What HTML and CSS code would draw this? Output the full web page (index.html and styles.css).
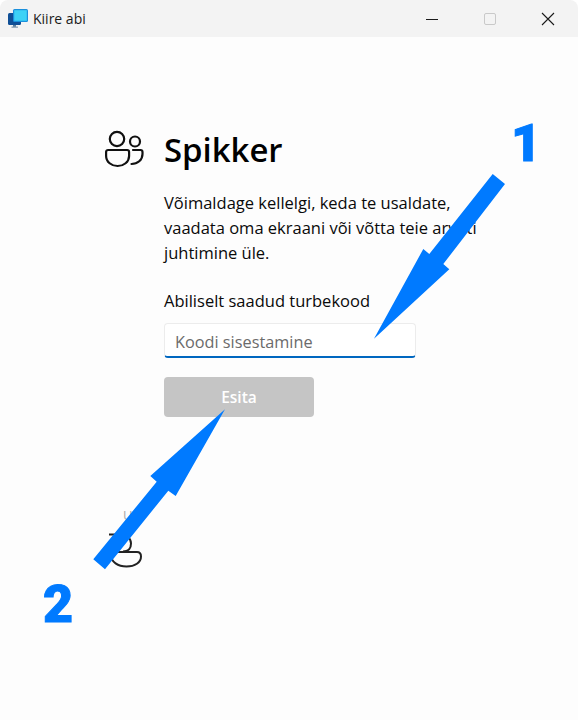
FILE: index.html
```html
<!DOCTYPE html>
<html lang="et">
<head>
    <meta charset="UTF-8">
    <meta name="viewport" content="width=device-width, initial-scale=1.0">
    <title>Kiire abi</title>
    <link rel="stylesheet" href="styles.css">
</head>
<body>
    <div class="window">
        <div class="titlebar">
            <svg class="app-icon" width="20" height="19" viewBox="0 0 20 19">
                <rect x="0" y="4" width="13" height="12" rx="1.5" fill="#0f4f96"/>
                <rect x="5" y="16" width="3" height="2" fill="#5b7f9e"/>
                <rect x="3.5" y="17.5" width="6.5" height="1.3" fill="#8aa0b3"/>
                <rect x="5" y="0" width="15" height="13" rx="1.5" fill="#1a8fdc"/>
                <rect x="6.2" y="1.2" width="12.6" height="10.6" fill="#3cd2f6"/>
            </svg>
            <span class="app-name">Kiire abi</span>
            <div class="controls">
                <svg width="14" height="14" viewBox="0 0 14 14"><path d="M1 7.5h12" stroke="#1a1a1a" fill="none"/></svg>
                <svg width="14" height="14" viewBox="0 0 14 14"><rect x="1.5" y="1.5" width="11" height="11" rx="1.5" stroke="#c9c9c9" fill="none"/></svg>
                <svg width="14" height="14" viewBox="0 0 14 14"><path d="M1 1l12 12M13 1L1 13" stroke="#1a1a1a" fill="none" stroke-width="1.1"/></svg>
            </div>
        </div>

        <div class="content">
            <div class="help-row">
                <svg class="people" width="42" height="40" viewBox="0 0 42 40">
                    <circle cx="14" cy="10" r="7.2" fill="none" stroke="#111" stroke-width="2.2"/>
                    <circle cx="32" cy="12.5" r="5" fill="none" stroke="#111" stroke-width="2.2"/>
                    <path d="M3.1 23a2 2 0 0 1 2-2h19a2 2 0 0 1 2 2v4c0 6-5.500 10-11.500 10S3.100 33 3.100 27z" fill="none" stroke="#111" stroke-width="2.2"/>
                    <path d="M30 21h7.500a2 2 0 0 1 2 2v2c0 6-5 10-11 10" fill="none" stroke="#111" stroke-width="2.2" stroke-linecap="round"/>
                </svg>
                <div class="help-body">
                    <h1>Spikker</h1>
                    <p class="intro">Võimaldage kellelgi, keda te usaldate, vaadata oma ekraani või võtta teie arvuti juhtimine üle.</p>
                    <label class="code-label" for="code">Abiliselt saadud turbekood</label>
                    <input class="code-input" id="code" type="text" placeholder="Koodi sisestamine">
                    <button class="submit" type="button">Esita</button>
                </div>
            </div>

            <div class="give-row">
                <span class="give-text">Ui</span>
                <svg class="give-icon" width="36" height="36" viewBox="0 0 36 36">
                    <path d="M2 1.500h12c6 0 10 4 10 9s-3 8-8 8" fill="none" stroke="#222" stroke-width="2"/>
                    <path d="M4 19h26c3 0 4 2 4 4.500 0 6-6 10-14.500 10C11 33.500 4 29 4 22z" fill="none" stroke="#222" stroke-width="2" stroke-linejoin="round"/>
                </svg>
            </div>
        </div>

        <!-- annotations drawn on top of the screenshot -->
        <svg class="arrows" width="578" height="720" viewBox="0 0 578 720">
            <polygon fill="#007aff" points="492.7,174 505,184 443.3,264 449.3,269.3 374,338.7 423.3,249 429.3,254"/>
            <polygon fill="#007aff" points="225,409.3 175.7,496 168.3,490.7 105,569.3 93.3,559.3 156.7,481.7 150.3,476"/>
        </svg>
        <span class="mark mark-one">1</span>
        <span class="mark mark-two">2</span>
    </div>
</body>
</html>
```

FILE: styles.css
```css
* {
    box-sizing: border-box;
}

body {
    margin: 0;
    background: #fff;
    font-family: "Open Sans", "Noto Sans", sans-serif;
    color: #0a0a0a;
}

.window {
    position: relative;
    width: 578px;
    height: 720px;
    overflow: hidden;
    background: #fdfdfd;
    border-radius: 8px 8px 0 0;
}

.titlebar {
    display: flex;
    align-items: center;
    height: 37px;
    padding-left: 8px;
    background: #f3f3f3;
}

.app-icon {
    margin-right: 5px;
}

.app-name {
    font-size: 14px;
    color: #1a1a1a;
}

.controls {
    display: flex;
    gap: 44px;
    margin-left: auto;
    margin-right: 23px;
}

.controls svg {
    display: block;
}

.content {
    padding: 92px 0 0 103px;
}

.help-row {
    display: flex;
    gap: 19px;
}

.people {
    flex: none;
}

.help-body {
    width: 314px;
    margin-top: -1px;
}

h1 {
    margin: 0 0 18px;
    font-size: 32.9px;
    line-height: 44px;
    font-weight: 600;
    color: #000;
}

.intro {
    margin: 0 0 25px;
    font-size: 16.5px;
    line-height: 25px;
}

.code-label {
    display: block;
    margin-bottom: 11px;
    font-size: 16.5px;
    line-height: 22px;
}

.code-input {
    display: block;
    width: 252px;
    height: 35px;
    padding: 3px 10px 0;
    background: #fff;
    border: 1px solid #ececec;
    border-bottom: 2px solid #0067c0;
    border-radius: 4px;
    font: inherit;
    font-size: 16.3px;
    outline: none;
}

.code-input::placeholder {
    color: #6b6b6b;
    opacity: 1;
}

.submit {
    display: block;
    width: 150px;
    height: 40px;
    margin-top: 19px;
    background: #c5c5c5;
    border: none;
    border-radius: 4px;
    font: inherit;
    font-size: 15.5px;
    font-weight: 600;
    color: #fff;
}

.give-row {
    display: flex;
    flex-direction: column;
    margin-top: 89px;
    padding-left: 4px;
}

.give-text {
    margin-left: 16px;
    font-size: 13px;
    line-height: 18px;
    color: #aaa;
}

.give-icon {
    margin-top: 9px;
}

.arrows {
    position: absolute;
    top: 0;
    left: 0;
}

.mark {
    position: absolute;
    font-family: Roboto, "Liberation Sans", sans-serif;
    font-weight: 900;
    color: #007aff;
    -webkit-text-stroke: 1px #007aff;
}

.mark-one {
    top: 114px;
    left: 511px;
    font-size: 52px;
    line-height: 60px;
}

.mark-two {
    top: 575px;
    left: 43px;
    font-size: 52px;
    line-height: 60px;
}
```
